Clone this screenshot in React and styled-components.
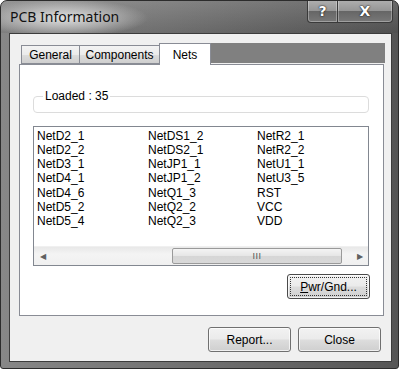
import React from "react";
import styled, { createGlobalStyle } from "styled-components";

const GlobalStyle = createGlobalStyle`
  html, body {
    margin: 0;
    padding: 0;
    background: #ffffff;
  }
  * {
    box-sizing: border-box;
  }
`;

const Window = styled.div`
  display: flex;
  flex-direction: column;
  width: 399px;
  height: 369px;
  padding: 0 6px 6px 8px;
  border: 1px solid #2c2c2c;
  border-radius: 7px 7px 3px 3px;
  background: linear-gradient(90deg, #878787 0%, #727272 45%, #555555 100%);
  font-family: "Liberation Sans", Arial, sans-serif;
  font-size: 12px;
  color: #000;
  overflow: hidden;
`;

const TitleBar = styled.div`
  display: flex;
  align-items: flex-start;
  height: 32px;
  margin: 0 -6px 0 -8px;
  padding-left: 9px;
  background:
    radial-gradient(ellipse 85px 19px at 62px 17px, rgba(230, 230, 230, 0.95), rgba(210, 210, 210, 0.5) 60%, rgba(200, 200, 200, 0) 100%),
    linear-gradient(180deg, rgba(255, 255, 255, 0.12), rgba(0, 0, 0, 0.06));
`;

const Title = styled.span`
  margin-top: 6px;
  font-family: "Noto Sans", "Open Sans", sans-serif;
  font-size: 14px;
  color: #111;
`;

const CaptionButtons = styled.div`
  display: flex;
  margin-left: auto;
  margin-right: 5px;
  margin-top: -1px;
`;

const CaptionButton = styled.div`
  display: flex;
  align-items: center;
  justify-content: center;
  width: ${(p) => p.$w}px;
  height: 23px;
  border: 1px solid #3a3a3a;
  border-top: none;
  border-radius: ${(p) => p.$radius};
  background: linear-gradient(180deg, #b0b0b0 0%, #969696 48%, #666666 52%, #787878 100%);
  box-shadow: inset 0 0 0 1px rgba(255, 255, 255, 0.3);
  color: #fff;
  font-family: "DejaVu Sans", sans-serif;
  font-weight: bold;
  font-size: ${(p) => p.$size}px;
  text-shadow: 0 0 2px #222, 0 0 1px #000;

  & + & {
    border-left: none;
  }
`;

const Client = styled.div`
  flex: 1;
  display: flex;
  flex-direction: column;
  border: 1px solid #3c3c3c;
  background: #f0f0f0;
  padding: 9px 9px 0 9px;
`;

const TabStrip = styled.div`
  display: flex;
  align-items: flex-end;
  width: 366px;
  padding-left: 2px;
  position: relative;
  z-index: 1;
`;

const Tab = styled.div`
  display: flex;
  align-items: center;
  justify-content: center;
  width: ${(p) => p.$w}px;
  height: ${(p) => (p.$active ? 22 : 19)}px;
  margin-bottom: ${(p) => (p.$active ? -1 : 0)}px;
  padding-top: ${(p) => (p.$active ? 0 : 1)}px;
  border: 1px solid #898c95;
  border-bottom: ${(p) => (p.$active ? "none" : "1px solid #898c95")};
  background: ${(p) =>
    p.$active ? "#ffffff" : "linear-gradient(180deg, #f3f3f3 0%, #ebebeb 50%, #dddddd 51%, #cfcfcf 100%)"};
  margin-right: -1px;
`;

const TabFill = styled.div`
  flex: 1;
  align-self: flex-start;
  height: 20px;
  margin-left: 1px;
  background: #808080;
`;

const Panel = styled.div`
  display: flex;
  flex-direction: column;
  width: 365px;
  height: 252px;
  border: 1px solid #898c95;
  background: #ffffff;
  padding: 0 14px 0 13px;
`;

const Group = styled.fieldset`
  margin: 24px 0 0 0;
  padding: 0;
  height: 24px;
  border: 1px solid #dcdcdc;
  border-radius: 4px;
`;

const GroupLabel = styled.legend`
  margin-left: 9px;
  padding: 0 2px;
  line-height: 14px;
  font-size: 12px;
`;

const ListBox = styled.div`
  display: flex;
  flex-direction: column;
  margin-top: 13px;
  height: 140px;
  border: 1px solid #828790;
  background: #fff;
`;

const NetGrid = styled.div`
  flex: 1;
  display: grid;
  grid-template-columns: 111px 109px 1fr;
  grid-auto-flow: column;
  grid-template-rows: repeat(7, 14.17px);
  padding: 2px 0 0 3px;
  line-height: 14px;
`;

const Net = styled.div`
  white-space: nowrap;
`;

const HScroll = styled.div`
  display: flex;
  align-items: stretch;
  height: 19px;
  background: linear-gradient(180deg, #e8e8e8, #f4f4f4 40%, #f0f0f0);
  border-top: 1px solid #f0f0f0;
`;

const ScrollArrow = styled.div`
  display: flex;
  align-items: center;
  justify-content: center;
  width: 17px;
  color: #606060;
  font-size: 8px;
`;

const ScrollTrack = styled.div`
  flex: 1;
  display: flex;
  padding: 1px 0;
`;

const Thumb = styled.div`
  display: flex;
  align-items: center;
  justify-content: center;
  margin-left: 121px;
  width: 170px;
  border: 1px solid #9a9a9a;
  border-radius: 2px;
  background: linear-gradient(180deg, #f4f4f4 0%, #e6e6e6 50%, #d6d6d6 51%, #d9d9d9 100%);
  color: #555;
  font-size: 9px;
  letter-spacing: 0.5px;
`;

const PanelActions = styled.div`
  display: flex;
  justify-content: flex-end;
  margin-top: 8px;
  margin-right: -1px;
`;

const Button = styled.button`
  display: flex;
  align-items: center;
  justify-content: center;
  width: ${(p) => p.$w || 83}px;
  height: ${(p) => p.$h || 25}px;
  padding: 0;
  border: 1px solid ${(p) => (p.$focused ? "#4a4a4a" : "#707070")};
  border-radius: 3px;
  background: linear-gradient(180deg, #f2f2f2 0%, #ebebeb 48%, #dddddd 52%, #cfcfcf 100%);
  box-shadow: inset 0 0 0 1px rgba(255, 255, 255, 0.7);
  font-family: "Liberation Sans", Arial, sans-serif;
  font-size: 12px;
  color: #000;
  position: relative;

  ${(p) =>
    p.$focused &&
    `
    &::after {
      content: "";
      position: absolute;
      inset: 2px;
      border: 1px dotted #333;
      border-radius: 1px;
    }
  `}

  & u {
    text-decoration: underline;
  }
`;

const Footer = styled.div`
  display: flex;
  justify-content: flex-end;
  gap: 7px;
  margin-top: 11px;
  padding-right: 1px;
`;

const nets = [
  "NetD2_1", "NetD2_2", "NetD3_1", "NetD4_1", "NetD4_6", "NetD5_2", "NetD5_4",
  "NetDS1_2", "NetDS2_1", "NetJP1_1", "NetJP1_2", "NetQ1_3", "NetQ2_2", "NetQ2_3",
  "NetR2_1", "NetR2_2", "NetU1_1", "NetU3_5", "RST", "VCC", "VDD",
];

export default function App() {
  return (
    <>
      <GlobalStyle />
      <Window>
        <TitleBar>
          <Title>PCB Information</Title>
          <CaptionButtons>
            <CaptionButton $w={31} $size={14} $radius="0 0 0 4px">?</CaptionButton>
            <CaptionButton $w={55} $size={14} $radius="0 0 4px 0">X</CaptionButton>
          </CaptionButtons>
        </TitleBar>
        <Client>
          <TabStrip>
            <Tab $w={59}>General</Tab>
            <Tab $w={81}>Components</Tab>
            <Tab $w={52} $active>Nets</Tab>
            <TabFill />
          </TabStrip>
          <Panel>
            <Group>
              <GroupLabel>Loaded : 35</GroupLabel>
            </Group>
            <ListBox>
              <NetGrid>
                {nets.map((n) => (
                  <Net key={n}>{n}</Net>
                ))}
              </NetGrid>
              <HScroll>
                <ScrollArrow>◀</ScrollArrow>
                <ScrollTrack>
                  <Thumb>III</Thumb>
                </ScrollTrack>
                <ScrollArrow>▶</ScrollArrow>
              </HScroll>
            </ListBox>
            <PanelActions>
              <Button $w={83} $h={25} $focused>
                <span><u>P</u>wr/Gnd...</span>
              </Button>
            </PanelActions>
          </Panel>
          <Footer>
            <Button>Report...</Button>
            <Button>Close</Button>
          </Footer>
        </Client>
      </Window>
    </>
  );
}
